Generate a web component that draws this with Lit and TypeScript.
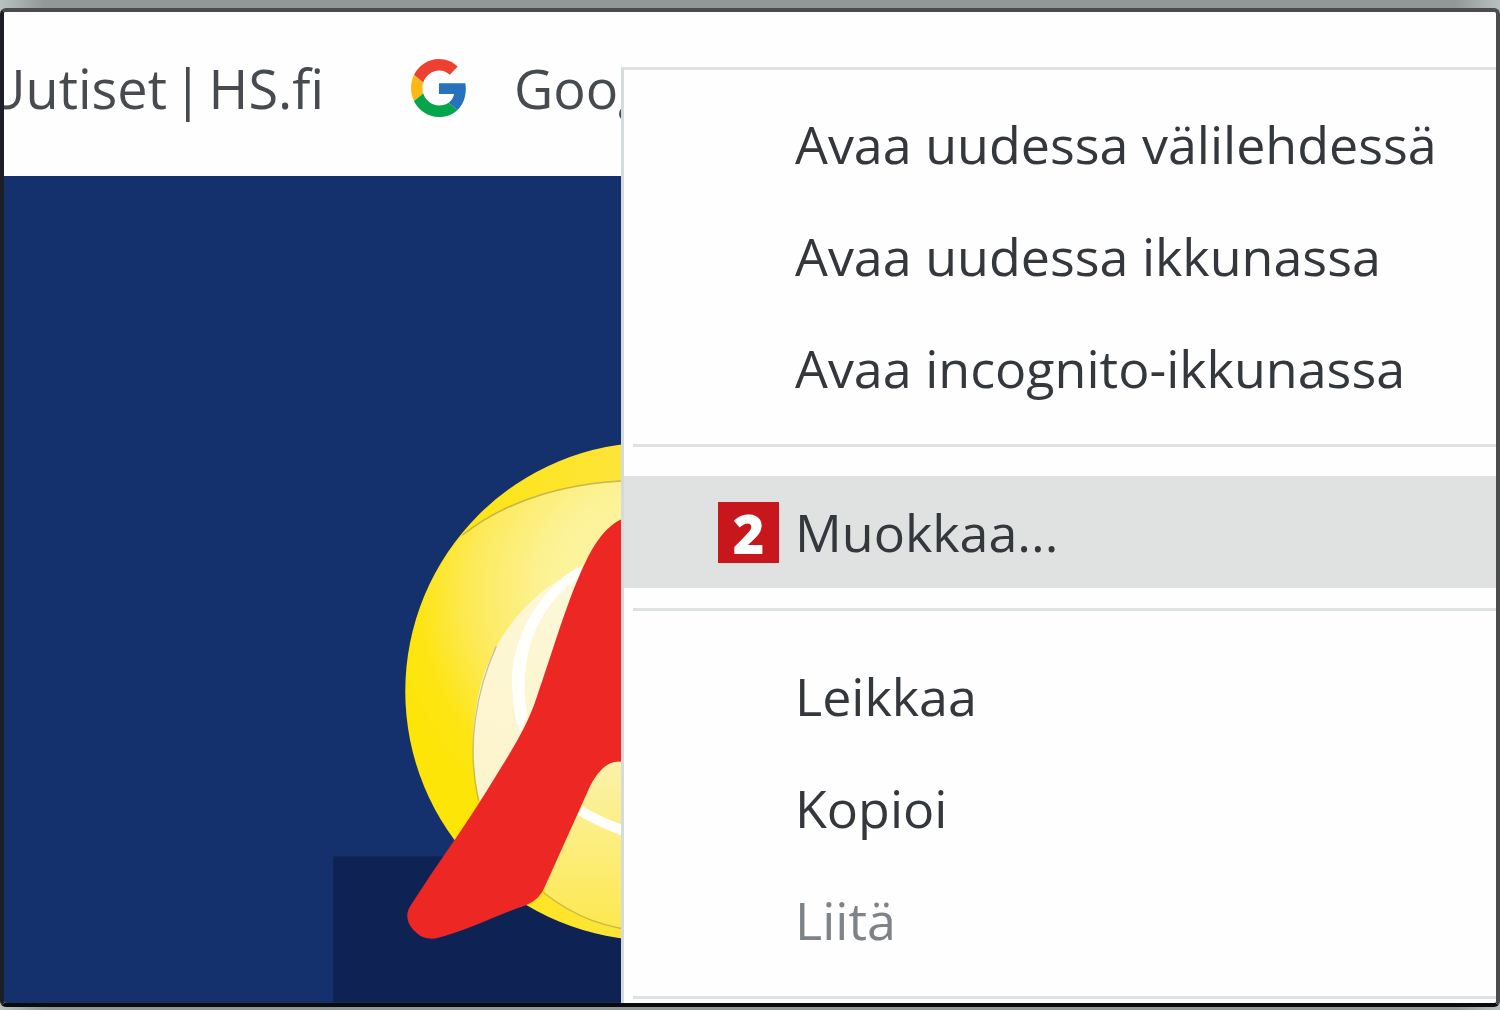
import { LitElement, html, svg, css, nothing } from "lit";
import { customElement, property, state } from "lit/decorators.js";
import { classMap } from "lit/directives/class-map.js";

interface MenuEntry {
  label: string;
  disabled?: boolean;
  marker?: string;
}

@customElement("google-mark")
class GoogleMark extends LitElement {
  static styles = css`
    :host {
      display: block;
      flex: none;
      width: 56px;
      height: 58px;
    }
    svg {
      display: block;
      width: 100%;
      height: 100%;
    }
  `;

  render() {
    return html`<svg viewBox="0 0 48 48" preserveAspectRatio="none" aria-hidden="true">
      <path fill="#ee4030" d="M24 9.5c3.54 0 6.71 1.22 9.21 3.6l6.85-6.85C35.9 2.38 30.47 0 24 0 14.62 0 6.51 5.38 2.56 13.22l7.98 6.19C12.43 13.72 17.74 9.5 24 9.5z" />
      <path fill="#2872bd" d="M46.98 24.55c0-1.57-.15-3.09-.38-4.55H24v9.02h12.94c-.58 2.96-2.26 5.48-4.78 7.18l7.73 6c4.51-4.18 7.09-10.36 7.09-17.65z" />
      <path fill="#fdb912" d="M10.53 28.59c-.48-1.45-.76-2.99-.76-4.59s.27-3.14.76-4.59l-7.98-6.19C.92 16.46 0 20.12 0 24c0 3.88.92 7.54 2.56 10.78l7.97-6.19z" />
      <path fill="#05a64b" d="M24 48c6.48 0 11.93-2.13 15.89-5.81l-7.73-6c-2.15 1.45-4.92 2.3-8.16 2.3-6.26 0-11.57-4.22-13.47-9.91l-7.98 6.19C6.51 42.62 14.62 48 24 48z" />
    </svg>`;
  }
}

@customElement("bookmark-bar")
class BookmarkBar extends LitElement {
  static styles = css`
    :host {
      display: flex;
      align-items: flex-start;
      box-sizing: border-box;
      height: 164px;
      padding-top: 44px;
      gap: 87px;
      background: #fefefe;
      overflow: hidden;
    }
    a {
      display: flex;
      align-items: center;
      flex: none;
      height: 64px;
      font: 54px/64px "Open Sans", "Noto Sans", sans-serif;
      color: #474b50;
      text-decoration: none;
      white-space: nowrap;
    }
    .cut {
      width: 320px;
      justify-content: flex-end;
      gap: 6px;
    }
    .site {
      gap: 47px;
    }
  `;

  render() {
    return html`
      <a class="cut" href="#hs"><span>Uutiset </span><span>| </span><span>HS.fi</span></a>
      <a class="site" href="#google"><google-mark></google-mark>Google</a>
    `;
  }
}

@customElement("page-art")
class PageArt extends LitElement {
  static styles = css`
    :host {
      display: block;
      background: #15316d;
      overflow: hidden;
    }
    svg {
      display: block;
      width: 100%;
      height: 100%;
    }
  `;

  render() {
    return html`<svg viewBox="4 176 1491 826" preserveAspectRatio="xMinYMax slice" aria-hidden="true">
      ${svg`
      <defs>
        <linearGradient id="rim" x1="0" y1="0" x2="1" y2="0">
          <stop offset="0" stop-color="#fde508" />
          <stop offset="0.45" stop-color="#fde43a" />
        </linearGradient>
        <radialGradient id="glow" gradientUnits="userSpaceOnUse" cx="650" cy="590" r="270">
          <stop offset="0" stop-color="#fdf6b4" />
          <stop offset="0.4" stop-color="#fcf294" />
          <stop offset="0.66" stop-color="#fdea5a" />
          <stop offset="0.86" stop-color="#fde514" />
          <stop offset="1" stop-color="#fde508" />
        </radialGradient>
        <linearGradient id="lower" gradientUnits="userSpaceOnUse" x1="0" y1="765" x2="0" y2="930">
          <stop offset="0" stop-color="#fbf1a8" />
          <stop offset="0.45" stop-color="#fcee80" />
          <stop offset="1" stop-color="#fde84e" />
        </linearGradient>
        <linearGradient id="cream" gradientUnits="userSpaceOnUse" x1="590" y1="570" x2="480" y2="790">
          <stop offset="0" stop-color="#fdf8d8" />
          <stop offset="1" stop-color="#fcf4cc" />
        </linearGradient>
      </defs>
      <rect x="333" y="856" width="400" height="146" fill="#0e2354" />
      <circle cx="654" cy="691" r="249" fill="url(#rim)" />
      <path d="M650 480C570 479 506 500 462 535C425 580 408 625 408 690C408 745 426 800 458 841L545 894C575 917 605 928 650 931Z" fill="url(#glow)" />
      <path d="M530 760L545 894C575 917 605 928 650 931L650 740Z" fill="url(#lower)" />
      <path d="M650 480C570 479 506 500 462 535" fill="none" stroke="#a99a4c" stroke-opacity=".65" stroke-width="1.5" />
      <path d="M543 892C575 917 605 928 650 932" fill="none" stroke="#a99a4c" stroke-opacity=".6" stroke-width="1.5" />
      <path d="M590 565C540 582 500 625 483 676C470 718 470 765 480 803L540 740Z" fill="url(#cream)" />
      <path d="M496 646C476 690 466 745 478 800" fill="none" stroke="#9b9472" stroke-opacity=".55" stroke-width="1.3" />
      <path d="M582 565C545 582 508 635 512 690Q513 716 520 732L527 715Q518 660 540 620Q552 597 578 578Z" fill="#fffffc" />
      <path d="M580 810Q597 822 650 840" fill="none" stroke="#fffffc" stroke-width="10" />
      <path d="M650 514C618 512 601 530 586 560C568 596 552 652 536 698C526 728 510 752 494 778C476 808 454 840 432 872L411 904C403 915 408 926 417 933Q423 939 435 938C465 931 495 915 525 905Q540 899 545 885L590 785Q603 761 618 761L650 763Z" fill="#ed2724" />
      `}
    </svg>`;
  }
}

@customElement("context-menu")
class ContextMenu extends LitElement {
  @property({ attribute: false }) groups: MenuEntry[][] = [];
  @state() private active = "Muokkaa...";

  static styles = css`
    :host {
      display: block;
      box-sizing: border-box;
      border-top: 3px solid #dfe2e2;
      border-left: 3px solid #d5dadd;
      padding-top: 18px;
      background: #fefefe;
      overflow: hidden;
    }
    .group + .group::before,
    .end {
      content: "";
      display: block;
      height: 3px;
      margin: 20px 0 29px 9px;
      background: #dfe2e2;
    }
    button {
      display: flex;
      align-items: center;
      width: 100%;
      height: 112px;
      padding: 0 0 0 94px;
      gap: 16px;
      border: 0;
      background: none;
      font: 52px/64px "Open Sans", "Noto Sans", sans-serif;
      color: #34383d;
      text-align: left;
      white-space: nowrap;
    }
    .active {
      background: #e0e2e1;
    }
    button:disabled {
      color: #7e8388;
    }
    .slot {
      flex: none;
      width: 61px;
      height: 61px;
      font: 800 54px/62px "Open Sans", "Noto Sans", sans-serif;
      text-align: center;
      color: #fff;
    }
    .marker {
      background: #c8161d;
    }
  `;

  private row(e: MenuEntry) {
    return html`<button
      type="button"
      role="menuitem"
      class=${classMap({ active: this.active === e.label })}
      ?disabled=${!!e.disabled}
      @mouseenter=${() => (this.active = e.label)}
    ><span class=${classMap({ slot: true, marker: !!e.marker })}>${e.marker ?? nothing}</span>${e.label}</button>`;
  }

  render() {
    return html`<div role="menu">
      ${this.groups.map((g) => html`<div class="group" role="group">${g.map((e) => this.row(e))}</div>`)}
      <div class="end"></div>
    </div>`;
  }
}

@customElement("app-root")
class AppRoot extends LitElement {
  private groups: MenuEntry[][] = [
    [
      { label: "Avaa uudessa välilehdessä" },
      { label: "Avaa uudessa ikkunassa" },
      { label: "Avaa incognito-ikkunassa" },
    ],
    [{ label: "Muokkaa...", marker: "2" }],
    [{ label: "Leikkaa" }, { label: "Kopioi" }, { label: "Liitä", disabled: true }],
  ];

  static styles = css`
    :host {
      display: flex;
      box-sizing: border-box;
      min-height: 100vh;
      padding: 8px 0 4px;
      background: linear-gradient(90deg, #b9c0c0, #929898 3%, #929898 97%, #b9c0c0);
    }
    .window {
      position: relative;
      display: flex;
      flex-direction: column;
      flex: 1;
      min-width: 0;
      border: 4px solid #4b4c4b;
      border-left-color: #1c1e24;
      border-bottom-color: #0a0b0d;
      border-radius: 6px;
      overflow: hidden;
      background: #fefefe;
    }
    page-art {
      flex: 1;
      min-height: 0;
    }
    context-menu {
      position: absolute;
      top: 55px;
      right: 0;
      bottom: 0;
      left: 617px;
    }
  `;

  render() {
    return html`<main class="window">
      <bookmark-bar></bookmark-bar>
      <page-art></page-art>
      <context-menu .groups=${this.groups}></context-menu>
    </main>`;
  }
}
